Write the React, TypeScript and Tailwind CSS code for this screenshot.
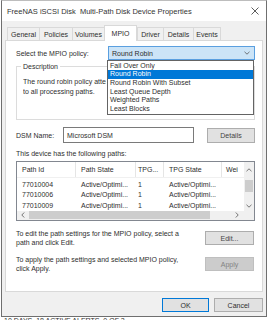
import React from "react";

const rows = [
  ["77010004", "Active/Optimi...", "1", "Active/Optimi..."],
  ["77010006", "Active/Optimi...", "1", "Active/Optimi..."],
  ["77010009", "Active/Optimi...", "1", "Active/Optimi..."],
];

const items = [
  "Fail Over Only",
  "Round Robin",
  "Round Robin With Subset",
  "Least Queue Depth",
  "Weighted Paths",
  "Least Blocks",
];

function Tab({ label, w, active }: { label: string; w: string; active?: boolean }) {
  if (active) {
    return (
      <div className={`${w} h-[16px] -mb-px bg-white border border-b-0 border-[#d9d9d9] flex items-center justify-center z-10`}>
        {label}
      </div>
    );
  }
  return (
    <div className={`${w} h-[13px] bg-[#f0f0f0] border border-b-0 border-r-0 border-[#d9d9d9] flex items-center justify-center`}>
      {label}
    </div>
  );
}

export default function App() {
  return (
    <div className="w-[270px] h-[320px] bg-white overflow-hidden font-['Liberation_Sans',Arial,sans-serif] text-[7px] leading-[9px] text-[#2e2e2e]">
      <div className="ml-[1px] w-[266px] h-[317px] border border-[#6f6f6f] border-t-[#bdbdbd] flex flex-col">
        {/* Title bar */}
        <div className="h-[20px] bg-white flex items-center justify-between pl-[5px] pr-[6px]">
          <span className="text-[7.5px] text-[#333]">FreeNAS iSCSI Disk&nbsp; Multi-Path Disk Device Properties</span>
          <svg width="8" height="8" viewBox="0 0 8 8" className="mr-[1px]">
            <path d="M0.5 0.5 L7.5 7.5 M7.5 0.5 L0.5 7.5" stroke="#333" strokeWidth="0.8" />
          </svg>
        </div>
        {/* Body */}
        <div className="flex-1 bg-[#f0f0f0] flex flex-col px-[3px] pt-[5px] pb-[3px]">
          {/* Tabs */}
          <div className="h-[14px] flex items-end pl-[2px]">
            <Tab label="General" w="w-[32px]" />
            <Tab label="Policies" w="w-[33px]" />
            <Tab label="Volumes" w="w-[32px]" />
            <Tab label="MPIO" w="w-[33px]" active />
            <Tab label="Driver" w="w-[26px]" />
            <Tab label="Details" w="w-[30px]" />
            <div className="w-[28px] h-[13px] bg-[#f0f0f0] border border-b-0 border-[#d9d9d9] flex items-center justify-center">Events</div>
          </div>
          {/* Panel */}
          <div className="h-[252px] bg-white border border-[#d9d9d9] relative pl-[10px] pr-[7px] pt-[5px] flex flex-col">
            {/* Policy row */}
            <div className="flex items-center h-[14px]">
              <span>Select the MPIO policy:</span>
              <div className="ml-auto w-[147px] h-[14px] bg-[#cce4f7] border border-[#5a9fe0] flex items-center pl-[3px] pr-[4px]">
                <span>Round Robin</span>
                <svg width="6" height="4" viewBox="0 0 6 4" className="ml-auto">
                  <path d="M0.5 0.8 L3 3.2 L5.5 0.8" stroke="#444" strokeWidth="0.7" fill="none" />
                </svg>
              </div>
            </div>
            {/* Description group */}
            <div className="mt-[6px] h-[54px] border border-[#dcdcdc] relative pl-[6px] pt-[10px]">
              <span className="absolute -top-[5px] left-[4px] bg-white px-[2px]">Description</span>
              <div className="w-[83px] overflow-hidden whitespace-nowrap leading-[10px]">
                The round robin policy attempts to evenly distribute incoming requests
                <br />
                to all processing paths.
              </div>
            </div>
            {/* DSM row */}
            <div className="mt-[7px] flex items-center h-[16px]">
              <span className="w-[47px]">DSM Name:</span>
              <div className="w-[131px] h-[16px] border border-[#7a7a7a] flex items-center pl-[3px]">Microsoft DSM</div>
              <div className="ml-auto w-[48px] h-[15px] bg-[#e1e1e1] border border-[#adadad] flex items-center justify-center text-[#444]">Details</div>
            </div>
            <div className="mt-[6px]">This device has the following paths:</div>
            {/* Table */}
            <div className="mt-[3px] h-[60px] border border-[#828790] flex flex-col">
              <div className="flex flex-1">
                <div className="flex-1 flex flex-col">
                  <div className="h-[16px] flex items-center border-b border-[#f0f0f0]">
                    <div className="w-[59px] pl-[5px] border-r border-[#e5e5e5] h-full flex items-center">Path Id</div>
                    <div className="w-[60px] pl-[5px] border-r border-[#e5e5e5] h-full flex items-center">Path State</div>
                    <div className="w-[28px] pl-[2px] border-r border-[#e5e5e5] h-full flex items-center">TPG...</div>
                    <div className="w-[58px] pl-[5px] border-r border-[#e5e5e5] h-full flex items-center">TPG State</div>
                    <div className="flex-1 pl-[4px] h-full flex items-center overflow-hidden whitespace-nowrap">Wei</div>
                  </div>
                  <div className="pt-[1px]">
                    {rows.map((r) => (
                      <div key={r[0]} className="h-[10.5px] flex items-center">
                        <div className="w-[59px] pl-[5px]">{r[0]}</div>
                        <div className="w-[60px] pl-[5px]">{r[1]}</div>
                        <div className="w-[28px] pl-[2px]">{r[2]}</div>
                        <div className="w-[58px] pl-[5px]">{r[3]}</div>
                      </div>
                    ))}
                  </div>
                </div>
                {/* vertical scrollbar */}
                <div className="w-[10px] bg-[#f0f0f0] flex flex-col items-center">
                  <svg width="6" height="4" viewBox="0 0 6 4" className="mt-[6px]">
                    <path d="M0.5 3.2 L3 0.8 L5.5 3.2" stroke="#555" strokeWidth="0.8" fill="none" />
                  </svg>
                  <div className="mt-[8px] w-[8px] h-[12px] bg-[#cdcdcd]" />
                  <svg width="6" height="4" viewBox="0 0 6 4" className="mt-auto mb-[3px]">
                    <path d="M0.5 0.8 L3 3.2 L5.5 0.8" stroke="#555" strokeWidth="0.8" fill="none" />
                  </svg>
                </div>
              </div>
              {/* horizontal scrollbar */}
              <div className="h-[10px] flex bg-[#f0f0f0]">
                <div className="flex-1 flex items-center">
                  <svg width="4" height="6" viewBox="0 0 4 6" className="ml-[4px]">
                    <path d="M3.2 0.5 L0.8 3 L3.2 5.5" stroke="#555" strokeWidth="0.8" fill="none" />
                  </svg>
                  <div className="ml-[4px] w-[181px] h-[8px] bg-[#cdcdcd]" />
                  <svg width="4" height="6" viewBox="0 0 4 6" className="ml-auto mr-[5px]">
                    <path d="M0.8 0.5 L3.2 3 L0.8 5.5" stroke="#555" strokeWidth="0.8" fill="none" />
                  </svg>
                </div>
                <div className="w-[10px] bg-[#f0f0f0]" />
              </div>
            </div>
            {/* Edit row */}
            <div className="mt-[8px] flex items-center">
              <div className="whitespace-nowrap">
                To edit the path settings for the MPIO policy, select a
                <br />
                path and click Edit.
              </div>
              <div className="ml-auto mr-[1px] w-[49px] h-[14px] bg-[#e1e1e1] border border-[#adadad] flex items-center justify-center text-[#444]">Edit...</div>
            </div>
            {/* Apply row */}
            <div className="mt-[8px] flex items-center">
              <div className="whitespace-nowrap">
                To apply the path settings and selected MPIO policy,
                <br />
                click Apply.
              </div>
              <div className="ml-auto mr-[1px] w-[49px] h-[14px] bg-[#cccccc] border border-[#bfbfbf] flex items-center justify-center text-[#838383]">Apply</div>
            </div>
            {/* Dropdown list overlay */}
            <div className="absolute left-[101px] top-[19px] w-[147px] bg-white border border-[#646464] py-[0.5px]">
              {items.map((it) => (
                <div
                  key={it}
                  className={`h-[8.7px] leading-[8.7px] pl-[2px] ${it === "Round Robin" ? "bg-[#0078d7] text-white" : ""}`}
                >
                  {it}
                </div>
              ))}
            </div>
          </div>
          {/* Bottom buttons */}
          <div className="mt-[6px] flex justify-end gap-[5px]">
            <div className="w-[47px] h-[14px] bg-[#e1e1e1] border border-[#0078d7] flex items-center justify-center">OK</div>
            <div className="w-[49px] h-[14px] bg-[#e1e1e1] border border-[#adadad] flex items-center justify-center">Cancel</div>
          </div>
        </div>
      </div>
      <div className="h-[3px] overflow-hidden pl-[4px] text-[7px] leading-[7px] text-[#333] whitespace-nowrap">
        10 DAYS, 18 ACTIVE ALERTS, 0 OF 2
      </div>
    </div>
  );
}
